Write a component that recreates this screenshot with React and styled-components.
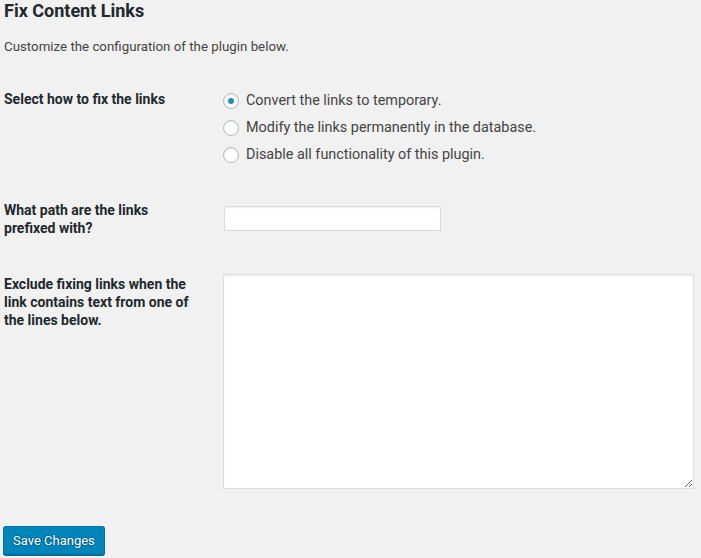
import React from "react";
import styled, { createGlobalStyle } from "styled-components";

const GlobalStyle = createGlobalStyle`
  html, body {
    margin: 0;
    padding: 0;
    background: #f1f1f1;
  }
  body {
    font-family: Roboto, "Noto Sans", "Liberation Sans", sans-serif;
    color: #23282d;
    font-size: 13px;
  }
`;

const Page = styled.div`
  padding: 0 4px 3px 4px;
  width: 697px;
  box-sizing: border-box;
`;

const Title = styled.h2`
  margin: 0;
  font-size: 18px;
  line-height: 21px;
  font-weight: 700;
  color: #23282d;
`;

const Intro = styled.p`
  margin: 16px 0 0;
  font-size: 13.3px;
  line-height: 19px;
  color: #444;
`;

const SettingsTable = styled.div`
  display: grid;
  grid-template-columns: 219px 1fr;
  margin-top: 34px;
`;

const RowLabel = styled.div`
  padding-top: ${(p) => p.$top}px;
  width: 196px;
  font-size: 14px;
  font-weight: 700;
  line-height: 18px;
  color: #23282d;
`;

const RowField = styled.div`
  padding-top: ${(p) => p.$top}px;
`;

const RadioList = styled.div`
  margin-top: -3px;
`;

const RadioOption = styled.label`
  display: flex;
  align-items: center;
  height: 27px;
  font-size: 14.4px;
  color: #444;
  cursor: pointer;
`;

const RadioCircle = styled.span`
  width: 16px;
  height: 16px;
  box-sizing: border-box;
  border-radius: 50%;
  border: 1px solid #b4b9be;
  background: #fff;
  box-shadow: inset 0 1px 2px rgba(0, 0, 0, 0.1);
  display: flex;
  align-items: center;
  justify-content: center;
  margin-right: 7px;
  flex: none;
  &::after {
    content: "";
    display: ${(p) => (p.$checked ? "block" : "none")};
    width: 6px;
    height: 6px;
    border-radius: 50%;
    background: #1e8cbe;
  }
`;

const TextInput = styled.input`
  display: block;
  width: 217px;
  height: 25px;
  box-sizing: border-box;
  border: 1px solid #ddd;
  background: #fff;
  box-shadow: inset 0 1px 2px rgba(0, 0, 0, 0.07);
  margin: 0 0 0 1px;
  padding: 3px 5px;
  font-size: 14px;
  font-family: inherit;
  outline: none;
`;

const TextArea = styled.textarea`
  display: block;
  width: 471px;
  height: 215px;
  box-sizing: border-box;
  border: 1px solid #ddd;
  background: #fff;
  box-shadow: inset 0 1px 2px rgba(0, 0, 0, 0.07);
  margin: 1px 0 0;
  padding: 2px 6px;
  font-size: 14px;
  font-family: inherit;
  outline: none;
`;

const Actions = styled.div`
  margin-top: 37px;
  margin-left: -1px;
`;

const SaveButton = styled.button`
  height: 29px;
  padding: 0 9px 1px;
  border: 1px solid #0073aa;
  border-bottom-color: #006799;
  border-radius: 3px;
  background: #0085ba;
  box-shadow: 0 1px 0 #006799;
  color: #fff;
  font-family: inherit;
  font-size: 13px;
  text-shadow: 0 -1px 1px #006799, 1px 0 1px #006799, 0 1px 1px #006799, -1px 0 1px #006799;
  cursor: pointer;
`;

const options = [
  { label: "Convert the links to temporary.", checked: true },
  { label: "Modify the links permanently in the database.", checked: false },
  { label: "Disable all functionality of this plugin.", checked: false },
];

export default function App() {
  return (
    <>
      <GlobalStyle />
      <Page>
        <Title>Fix Content Links</Title>
        <Intro>Customize the configuration of the plugin below.</Intro>
        <SettingsTable>
          <RowLabel $top={0}>Select how to fix the links</RowLabel>
          <RowField $top={0}>
            <RadioList>
              {options.map((o) => (
                <RadioOption key={o.label}>
                  <RadioCircle $checked={o.checked} />
                  {o.label}
                </RadioOption>
              ))}
            </RadioList>
          </RowField>

          <RowLabel $top={33}>What path are the links prefixed with?</RowLabel>
          <RowField $top={38}>
            <TextInput type="text" />
          </RowField>

          <RowLabel $top={38}>
            Exclude fixing links when the link contains text from one of the lines below.
          </RowLabel>
          <RowField $top={36}>
            <TextArea />
          </RowField>
        </SettingsTable>
        <Actions>
          <SaveButton type="button">Save Changes</SaveButton>
        </Actions>
      </Page>
    </>
  );
}
